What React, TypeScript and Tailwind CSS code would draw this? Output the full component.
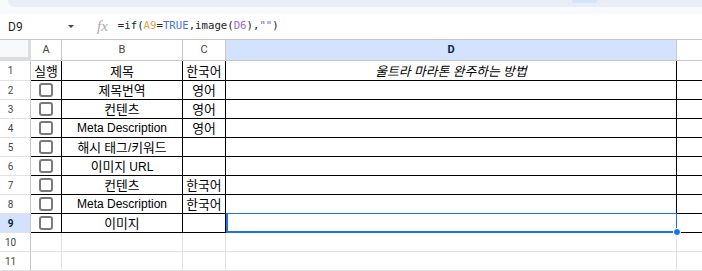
import React from "react";

const rows: { a?: string; b: string; c: string; d?: string }[] = [
  { a: "실행", b: "제목", c: "한국어", d: "울트라 마라톤 완주하는 방법" },
  { b: "제목번역", c: "영어" },
  { b: "컨텐츠", c: "영어" },
  { b: "Meta Description", c: "영어" },
  { b: "해시 태그/키워드", c: "" },
  { b: "이미지 URL", c: "" },
  { b: "컨텐츠", c: "한국어" },
  { b: "Meta Description", c: "한국어" },
  { b: "이미지", c: "" },
];

const font = { fontFamily: '"Liberation Sans", "Noto Sans CJK KR", Arial, sans-serif' };

function Txt({ s }: { s: string }) {
  const parts = s.split(/([\uAC00-\uD7A3]+)/).filter((p) => p.length > 0);
  return (
    <span className="whitespace-nowrap">
      {parts.map((p, i) =>
        /[\uAC00-\uD7A3]/.test(p) ? (
          <span key={i} className="text-[12.8px]" style={{ fontFamily: '"Noto Sans CJK KR", sans-serif' }}>
            {p}
          </span>
        ) : (
          <span key={i}>{p}</span>
        )
      )}
    </span>
  );
}

function Checkbox() {
  return <div className="w-[14px] h-[14px] rounded-[3px] border-2 border-[#7a7a7a] bg-white" />;
}

export default function App() {
  return (
    <div className="w-[702px] h-[271px] overflow-hidden bg-white relative" style={font}>
      {/* top strip */}
      <div className="h-[14px] bg-[#f8fafd] flex flex-col">
        <div className="h-[7px] ml-[8px] bg-[#e9eef6] rounded-bl-[8px] flex">
          <div className="ml-[564px] w-[25px] h-[3px] bg-[#d3e3fd] rounded-b-[3px]" />
        </div>
      </div>
      {/* formula bar */}
      <div className="h-[25px] flex items-center bg-white">
        <div className="pl-[8px] w-[60px] text-[12px] text-[#1f1f1f]" style={{ fontFamily: 'Roboto, "Liberation Sans", sans-serif' }}>
          D9
        </div>
        <div className="w-0 h-0 border-l-[3px] border-r-[3px] border-t-[3px] border-l-transparent border-r-transparent border-t-[#444746] ml-[8px]" />
        <div className="ml-[23px] text-[15px] italic text-[#a9a9a9] leading-none" style={{ fontFamily: '"Liberation Serif", serif' }}>
          fx
        </div>
        <div className="ml-[10px] text-[10.7px] text-[#202124] whitespace-pre" style={{ fontFamily: '"DejaVu Sans Mono", "Liberation Mono", monospace' }}>
          <span>=if(</span>
          <span className="text-[#e8a04c]">A9</span>
          <span>=</span>
          <span className="text-[#4a73de]">TRUE</span>
          <span>,image(</span>
          <span className="text-[#9c6bd0]">D6</span>
          <span>),</span>
          <span className="text-[#7a6bd6]">""</span>
          <span>)</span>
        </div>
      </div>
      {/* column header */}
      <div className="flex h-[22px] border-t border-[#c7c7c7] text-[11px] text-[#444746]" style={{ fontFamily: 'Roboto, "Liberation Sans", sans-serif' }}>
        <div className="w-[31px] bg-[#f8f9fa] border-r-[3px] border-b-[4px] border-[#dadce0]" />
        <div className="w-[31px] border-r border-b border-[#c7c7c7] flex items-center justify-center">A</div>
        <div className="w-[121px] border-r border-b border-[#c7c7c7] flex items-center justify-center">B</div>
        <div className="w-[43px] border-r border-b border-[#c7c7c7] flex items-center justify-center">C</div>
        <div className="w-[451px] border-r border-b border-[#c7c7c7] bg-[#d3e3fd] flex items-center justify-center font-bold text-[#0b1f44]">D</div>
        <div className="flex-1 border-b border-[#c7c7c7]" />
      </div>
      {/* data rows */}
      {rows.map((r, i) => {
        const n = i + 1;
        const sel = n === 9;
        return (
          <div key={i} className={`flex ${n === 1 ? "h-[20px]" : "h-[19px]"} text-[12px] text-black`}>
            <div className={`w-[31px] border-r border-b border-r-[#c7c7c7] border-b-[#e1e1e1] flex items-center ${sel ? "bg-[#d3e3fd]" : "bg-white"}`}>
              <span className={`w-[21px] text-center text-[10px] ${sel ? "font-bold text-[#0b1f44]" : "text-[#444746]"}`} style={{ fontFamily: 'Roboto, "Liberation Sans", sans-serif' }}>
                {n}
              </span>
            </div>
            <div className="w-[31px] border-r border-b border-black flex items-center justify-center">
              {r.a ? <Txt s={r.a} /> : <Checkbox />}
            </div>
            <div className="w-[121px] border-r border-b border-black flex items-center justify-center">
              <Txt s={r.b} />
            </div>
            <div className="w-[43px] border-r border-b border-black flex items-center justify-center">
              {r.c && <Txt s={r.c} />}
            </div>
            <div className="w-[451px] border-r border-b border-black flex items-center justify-center relative">
              {r.d && (
                <span className="italic">
                  <Txt s={r.d} />
                </span>
              )}
              {sel && (
                <div className="absolute left-0 top-[-1px] right-[-1px] bottom-[-1px] border-l-2 border-t border-r border-b-2 border-[#1a73e8]">
                  <div className="absolute right-[-5px] bottom-[-5px] w-[8px] h-[8px] rounded-full bg-[#1a73e8] border border-white" />
                </div>
              )}
            </div>
            <div className="flex-1 border-b border-black" />
          </div>
        );
      })}
      {[10, 11].map((n) => (
        <div key={n} className="flex h-[19px]">
          <div className="w-[31px] border-r border-b border-r-[#c7c7c7] border-b-[#e1e1e1] flex items-center">
            <span className="w-[21px] text-center text-[10px] text-[#444746]" style={{ fontFamily: 'Roboto, "Liberation Sans", sans-serif' }}>
              {n}
            </span>
          </div>
          <div className="w-[31px] border-r border-b border-[#e1e1e1]" />
          <div className="w-[121px] border-r border-b border-[#e1e1e1]" />
          <div className="w-[43px] border-r border-b border-[#e1e1e1]" />
          <div className="w-[451px] border-r border-b border-[#e1e1e1]" />
          <div className="flex-1 border-b border-[#e1e1e1]" />
        </div>
      ))}
    </div>
  );
}
